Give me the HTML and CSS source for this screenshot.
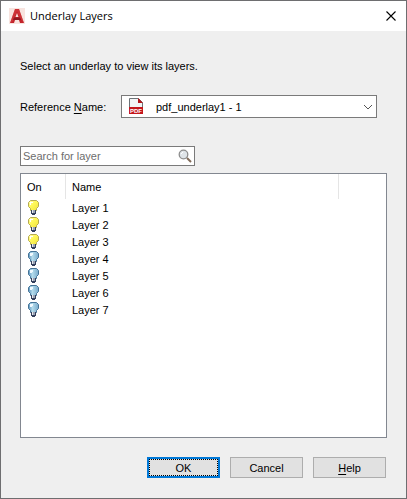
FILE: index.html
```html
<!DOCTYPE html>
<html lang="en">
<head>
<meta charset="utf-8">
<title>Underlay Layers</title>
<link rel="stylesheet" href="styles.css">
</head>
<body>
<svg class="defs" aria-hidden="true">
  <defs>
    <linearGradient id="glass-on" x2="1" y2="1"><stop offset="0" stop-color="#fffbc0"/><stop offset=".4" stop-color="#fff95a"/><stop offset="1" stop-color="#f0e23c"/></linearGradient>
    <linearGradient id="glass-off" x2="1" y2="0"><stop offset="0" stop-color="#5e96c0"/><stop offset=".4" stop-color="#b4dcec"/><stop offset="1" stop-color="#78aacb"/></linearGradient>
    <g id="bulb-base">
      <path d="M4 10h5v4H8v1H5v-1H4z" fill="#34405c"/>
      <path d="M5 10h1v3H5z" fill="#e6e8ec"/><path d="M6 10h2v3H6z" fill="#9aa3b4"/>
    </g>
    <symbol id="bulb-on" viewBox="0 0 12 16">
      <path d="M3.5.5h6l2 2v4l-2 2v2h-6v-2l-2-2v-4z" fill="url(#glass-on)" stroke="#b5aa50"/>
      <path d="M3 2h3v1H4v2H3z" fill="#fff"/><use href="#bulb-base"/>
    </symbol>
    <symbol id="bulb-off" viewBox="0 0 12 16">
      <path d="M3.5.5h6l2 2v4l-2 2v2h-6v-2l-2-2v-4z" fill="url(#glass-off)" stroke="#457396"/>
      <path d="M3 2h3v2H5v1H3z" fill="#f1faff"/><use href="#bulb-base"/>
    </symbol>
  </defs>
</svg>
<main class="dialog">
  <header class="titlebar">
    <svg class="logo" viewBox="0 0 16 16" aria-hidden="true">
      <rect width="16" height="16" fill="#f8e4df"/>
      <path d="M1 15 6 1h4l5 14h-4l-1-3H6l-1 3z" fill="#c3242b"/>
      <path d="M8 5 6.5 9h3z" fill="#f8e4df"/>
      <path d="M6 1 1 15l3-2 4-10 3 7 4 5-5-14z" fill="#dc4a4b" opacity=".4"/>
      <path d="M5 9.5h6l1 2.5H4z" fill="#8f1820"/>
    </svg>
    <h1 class="title">Underlay Layers</h1>
    <button class="close" type="button" aria-label="Close">
      <svg viewBox="0 0 10 10" aria-hidden="true"><path d="M.5.5l9 9M9.5.5l-9 9" stroke="#000" stroke-width="1.1" fill="none"/></svg>
    </button>
  </header>
  <form class="content">
    <p class="intro">Select an underlay to view its layers.</p>
    <div class="reference">
      <label for="reference-name">Reference <u>N</u>ame:</label>
      <div class="combo">
        <svg class="pdf" viewBox="0 0 16 16" aria-hidden="true">
          <path d="M1.5 15V.5h9l4 4V15z" fill="#f3f5f6" stroke="#6c7276"/>
          <path d="M10 0l5 5h-5z" fill="#b5161b"/>
          <rect x="1" y="9" width="14" height="7" fill="#c4161c"/>
          <text x="8" y="15" text-anchor="middle" class="pdf-text">PDF</text>
        </svg>
        <select id="reference-name"><option>pdf_underlay1 - 1</option></select>
        <svg class="chevron" viewBox="0 0 10 6" aria-hidden="true"><path d="M1 1l4 4 4-4" stroke="#555" fill="none"/></svg>
      </div>
    </div>
    <div class="search">
      <input type="text" placeholder="Search for layer" aria-label="Search for layer">
      <svg class="lens" viewBox="0 0 14 14" aria-hidden="true">
        <path d="M9 9l4 4" stroke="#806a58" stroke-width="2"/>
        <circle cx="5.5" cy="5.5" r="4.3" fill="#dfe4e8" stroke="#8c8c8c" stroke-width="1.3"/>
        <path d="M3 5l2-2" stroke="#fff"/>
      </svg>
    </div>
    <div class="list">
      <table>
        <thead><tr><th class="on">On</th><th class="name">Name</th><th></th></tr></thead>
        <tbody>
          <tr><td><svg class="bulb" role="img" aria-label="On"><use href="#bulb-on"/></svg></td><td>Layer 1</td><td></td></tr>
          <tr><td><svg class="bulb" role="img" aria-label="On"><use href="#bulb-on"/></svg></td><td>Layer 2</td><td></td></tr>
          <tr><td><svg class="bulb" role="img" aria-label="On"><use href="#bulb-on"/></svg></td><td>Layer 3</td><td></td></tr>
          <tr><td><svg class="bulb" role="img" aria-label="Off"><use href="#bulb-off"/></svg></td><td>Layer 4</td><td></td></tr>
          <tr><td><svg class="bulb" role="img" aria-label="Off"><use href="#bulb-off"/></svg></td><td>Layer 5</td><td></td></tr>
          <tr><td><svg class="bulb" role="img" aria-label="Off"><use href="#bulb-off"/></svg></td><td>Layer 6</td><td></td></tr>
          <tr><td><svg class="bulb" role="img" aria-label="Off"><use href="#bulb-off"/></svg></td><td>Layer 7</td><td></td></tr>
        </tbody>
      </table>
    </div>
    <footer class="actions">
      <button class="button primary" type="button"><span>OK</span></button>
      <button class="button" type="button">Cancel</button>
      <button class="button" type="button"><span><u>H</u>elp</span></button>
    </footer>
  </form>
</main>
</body>
</html>
```
FILE: styles.css
```css
* { box-sizing: border-box; }

body {
  margin: 0;
  font: 11px/16px "Liberation Sans", Arial, sans-serif;
  color: #000;
}

.defs { position: absolute; width: 0; height: 0; }

button, input, select { font: inherit; color: inherit; }

u { text-underline-offset: 2px; }

.dialog {
  display: flex;
  flex-direction: column;
  min-height: 100vh;
  background: #efefef;
  border: 1px solid #6e6e70;
}

.titlebar {
  display: flex;
  align-items: center;
  height: 30px;
  padding: 0 10px 0 8px;
  background: #fff;
}

.logo { width: 16px; height: 16px; }

.title {
  flex: 1;
  margin: 0 0 0 5px;
  font: 11px/16px "Open Sans", "Noto Sans", sans-serif;
}

.close {
  display: flex;
  padding: 0;
  border: 0;
  background: none;
}

.close svg { width: 10px; height: 10px; }

.content {
  flex: 1;
  display: flex;
  flex-direction: column;
  padding: 27px 19px 20px;
}

.intro { margin: 0 0 21px; }

.reference {
  display: grid;
  grid-template-columns: 101px 1fr;
  align-items: center;
  margin: 0 10px 28px 0;
}

.combo { position: relative; display: flex; }

.combo select {
  flex: 1;
  height: 23px;
  padding: 0 20px 0 34px;
  border: 1px solid #7a7a7a;
  border-radius: 0;
  background: #fff;
  appearance: none;
}

.pdf { position: absolute; left: 7px; top: 3px; width: 16px; height: 16px; }

.pdf-text { font: bold 6px "Liberation Sans", sans-serif; fill: #fff; }

.chevron { position: absolute; right: 4px; top: 9px; width: 10px; height: 6px; }

.search {
  display: flex;
  align-items: center;
  width: 175px;
  height: 20px;
  margin-bottom: 7px;
  padding: 0 2px;
  border: 1px solid #7a7a7a;
  background: #fff;
}

.search input {
  flex: 1;
  min-width: 0;
  padding: 0;
  border: 0;
  background: none;
  outline: 0;
}

.search input::placeholder { color: #6d6d6d; opacity: 1; }

.lens { width: 14px; height: 14px; }

.list {
  flex: 1;
  margin-bottom: 19px;
  border: 1px solid #828790;
  background: #fff;
}

table {
  width: 100%;
  border-collapse: separate;
  border-spacing: 0;
  table-layout: fixed;
}

th, td { padding: 0 6px; font-weight: normal; text-align: left; }

th { height: 25px; border-right: 1px solid #e5e5e5; }

th:last-child { border: 0; }

.on { width: 45px; }

.name { width: 273px; }

td { height: 17px; }

.bulb { display: block; width: 12px; height: 16px; }

.actions {
  display: flex;
  justify-content: flex-end;
  gap: 10px;
  padding-right: 1px;
}

.button {
  display: flex;
  align-items: center;
  justify-content: center;
  width: 73px;
  height: 21px;
  padding: 0;
  border: 1px solid #adadad;
  background: #e1e1e1;
}

.primary {
  border: 2px solid #0078d7;
  outline: 1px dotted #000;
  outline-offset: -3px;
}
```
